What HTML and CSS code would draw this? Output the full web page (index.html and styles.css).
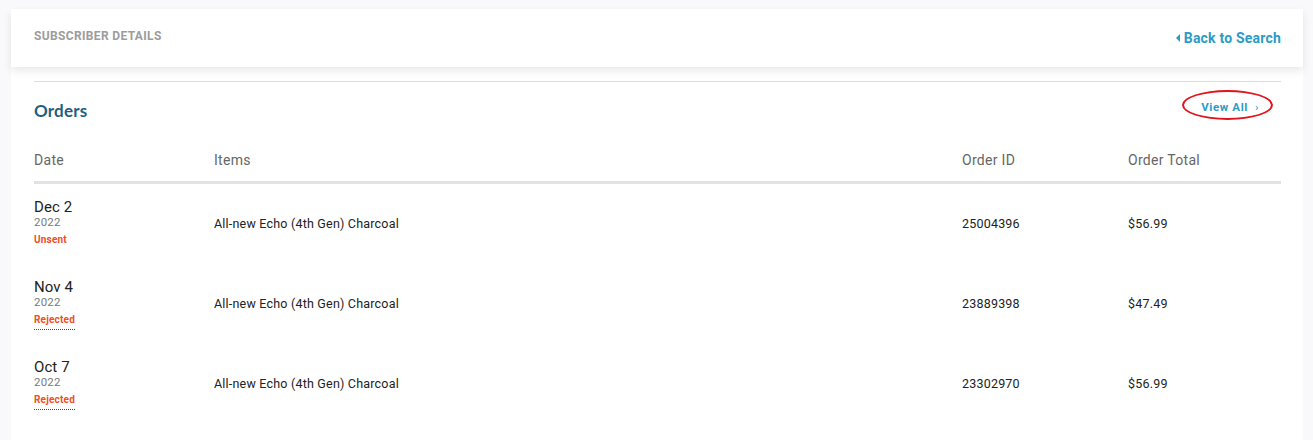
FILE: index.html
```html
<!DOCTYPE html>
<html>
<head>
<meta charset="utf-8">
<link rel="stylesheet" href="styles.css">
</head>
<body>
<div class="card">
  <header class="topbar">
    <span class="title">SUBSCRIBER DETAILS</span>
    <a class="back"><span class="caret"></span>Back to Search</a>
  </header>
  <section class="content">
    <div class="rule"></div>
    <div class="section-head">
      <h2>Orders</h2>
      <a class="view-all">View All<span class="chev">›</span><span class="ring"></span></a>
    </div>
    <div class="table">
      <div class="row head">
        <div>Date</div><div>Items</div><div>Order ID</div><div>Order Total</div>
      </div>
      <div class="row">
        <div class="date"><div class="d">Dec 2</div><div class="y">2022</div><div class="status">Unsent</div></div>
        <div>All-new Echo (4th Gen) Charcoal</div><div>25004396</div><div>$56.99</div>
      </div>
      <div class="row">
        <div class="date"><div class="d">Nov 4</div><div class="y">2022</div><div class="status dotted">Rejected</div></div>
        <div>All-new Echo (4th Gen) Charcoal</div><div>23889398</div><div>$47.49</div>
      </div>
      <div class="row">
        <div class="date"><div class="d">Oct 7</div><div class="y">2022</div><div class="status dotted">Rejected</div></div>
        <div>All-new Echo (4th Gen) Charcoal</div><div>23302970</div><div>$56.99</div>
      </div>
    </div>
  </section>
</div>
</body>
</html>
```

FILE: styles.css
```css
html, body { margin: 0; padding: 0; }
body {
  background: #f9f9fc;
  font-family: Roboto, "Liberation Sans", sans-serif;
  height: 440px;
  overflow: hidden;
}
.card {
  margin: 9px 0 0 11px;
  width: 1292px;
  background: #fff;
  min-height: 431px;
}
.topbar {
  height: 58px;
  display: flex;
  align-items: center;
  justify-content: space-between;
  padding: 0 22px 0 23px;
  box-shadow: 0 4px 8px rgba(0,0,0,0.09);
  position: relative;
}
.title {
  font-size: 12px;
  font-weight: 700;
  color: #9c9c9c;
  letter-spacing: 0.35px;
  margin-top: -4px;
}
.back {
  font-size: 14px;
  font-weight: 700;
  color: #2b9cc6;
  display: flex;
  align-items: center;
  letter-spacing: 0.2px;
}
.caret {
  width: 0; height: 0;
  border-top: 4px solid transparent;
  border-bottom: 4px solid transparent;
  border-right: 4px solid #2b9cc6;
  margin-right: 4px;
}
.content {
  padding: 14px 22px 0 23px;
}
.rule { height: 1px; background: #dcdcdc; }
.section-head {
  height: 56px;
  display: flex;
  align-items: center;
  justify-content: space-between;
}
h2 {
  margin: 0;
  font-family: Lato, "Open Sans", sans-serif;
  font-size: 17px;
  font-weight: 700;
  color: #1d5f85;
  letter-spacing: 0.2px;
}
.view-all {
  position: relative;
  display: inline-block;
  line-height: 14px;
  font-size: 11.5px;
  font-weight: 700;
  color: #2b9cc6;
  margin-right: 22px;
  margin-top: -6px;
  letter-spacing: 0.6px;
}
.chev { margin-left: 7px; font-weight: 400; }
.ring {
  position: absolute;
  left: -19px; top: -10px;
  width: 87px; height: 26px;
  border: 2.5px solid #e0141b;
  border-radius: 50%;
}
.row {
  display: grid;
  grid-template-columns: 180px 748px 166px 1fr;
  align-items: center;
  font-size: 12.5px;
  letter-spacing: 0.2px;
  color: #222;
  height: 80px;
}
.row.head {
  height: 43px;
  font-size: 14px;
  letter-spacing: 0.3px;
  color: #666;
  border-bottom: 3px solid #e2e2e2;
}
.row:not(.head) { margin-top: -1px; margin-bottom: 1px; }
.date { padding-top: 2px; }
.d { font-size: 15px; color: #222; line-height: 16px; letter-spacing: 0.1px; }
.y { font-size: 11.5px; color: #7a7a7a; line-height: 14px; letter-spacing: 0.2px; }
.status {
  display: inline-block;
  font-size: 10px;
  font-weight: 700;
  color: #f04e23;
  line-height: 12px;
  margin-top: 5px;
  padding-bottom: 3px;
  letter-spacing: 0.2px;
}
.status.dotted { border-bottom: 1px dotted #8a2d10; }
```
